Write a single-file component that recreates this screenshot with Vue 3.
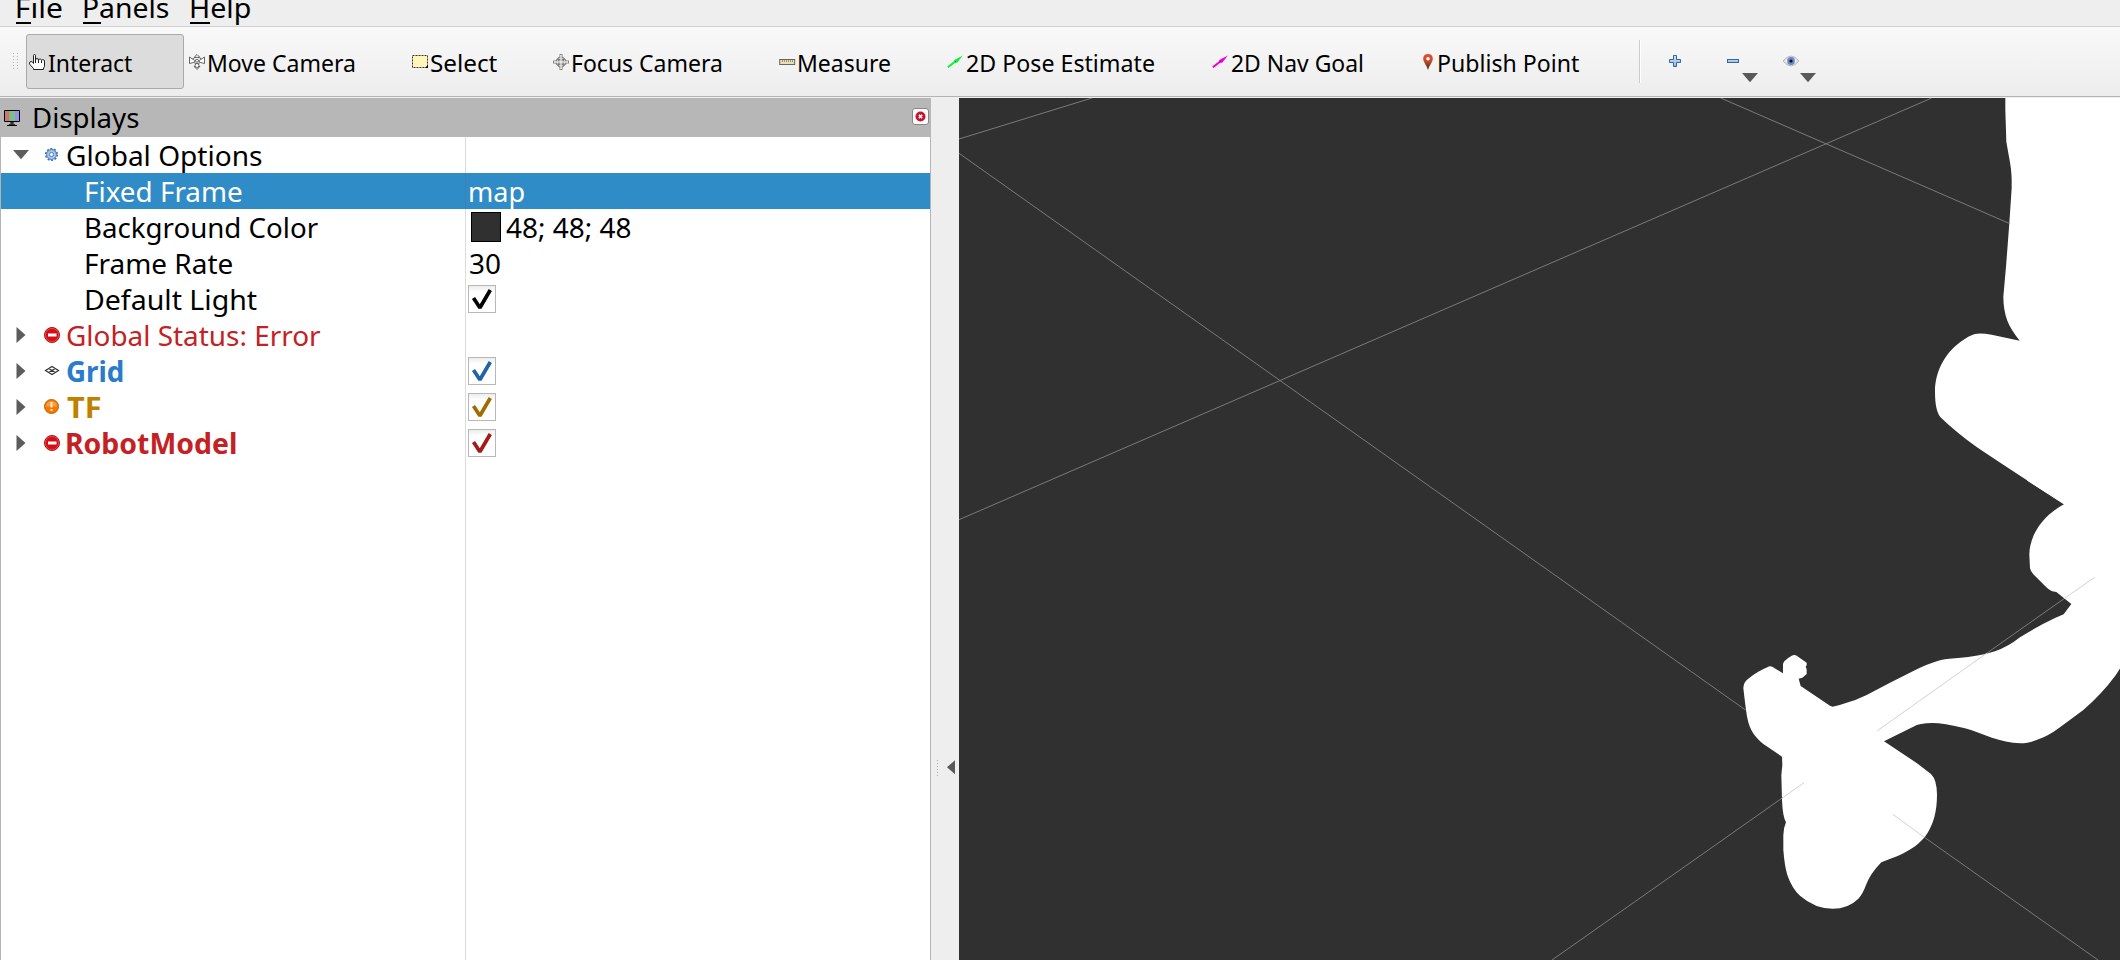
<script setup>
const ruler = document.createElement('canvas').getContext('2d')

// Squeezes a label horizontally so that its inked width equals the bound value.
const vFit = {
  mounted(el, { value }) {
    const css = getComputedStyle(el)
    ruler.font = `${css.fontWeight} ${css.fontSize} ${css.fontFamily}`
    const m = ruler.measureText(el.textContent)
    const s = value / (m.actualBoundingBoxLeft + m.actualBoundingBoxRight)
    el.style.transform = `translateX(${m.actualBoundingBoxLeft * s}px) scaleX(${s})`
  },
}

const menus = [
  { key: 'F', rest: 'ile', ink: 45, width: 66.5, line: 15 },
  { key: 'P', rest: 'anels', ink: 85, width: 107, line: 18 },
  { key: 'H', rest: 'elp', ink: 59, width: 80, line: 20 },
]

const tools = [
  { id: 'hand', label: 'Interact', width: 160, gap: 2.5, ink: 84, active: true },
  { id: 'move', label: 'Move Camera', width: 223, gap: 3.5, ink: 146 },
  { id: 'select', label: 'Select', width: 141, gap: 2.5, ink: 66 },
  { id: 'focus', label: 'Focus Camera', width: 226, gap: 3.5, ink: 149 },
  { id: 'measure', label: 'Measure', width: 168, gap: 3.5, ink: 91 },
  { id: 'pose', label: '2D Pose Estimate', width: 265, gap: 3.5, ink: 187 },
  { id: 'goal', label: '2D Nav Goal', width: 208, gap: 3.5, ink: 130 },
  { id: 'pin', label: 'Publish Point', width: 214, gap: 3, ink: 140 },
]

const rows = [
  { label: 'Global Options', ink: 195, icon: 'gear', open: true },
  { label: 'Fixed Frame', ink: 156, child: true, value: 'map', valueInk: 54, selected: true },
  { label: 'Background Color', ink: 232.5, child: true, swatch: true, value: '48; 48; 48', valueInk: 124.5 },
  { label: 'Frame Rate', ink: 146.5, child: true, value: '30', valueInk: 30 },
  { label: 'Default Light', ink: 171, child: true, check: '#000' },
  { label: 'Global Status: Error', ink: 254, icon: 'error', closed: true, tone: 'red' },
  { label: 'Grid', ink: 55.5, icon: 'grid', closed: true, tone: 'blue', bold: true, check: '#2163a5' },
  { label: 'TF', ink: 33, icon: 'warn', closed: true, tone: 'amber', bold: true, check: '#a06c00' },
  { label: 'RobotModel', ink: 169, icon: 'error', closed: true, tone: 'red', bold: true, check: '#a11a1c' },
]
</script>

<template>
  <div class="window">
    <nav class="menubar">
      <div v-for="m in menus" :key="m.key" class="menu" :style="{ width: m.width + 'px' }">
        <span v-fit="m.ink" class="fit">{{ m.key }}{{ m.rest }}</span>
        <i class="mnemonic" :style="{ width: m.line + 'px' }"></i>
      </div>
    </nav>

    <header class="toolbar">
      <svg class="grip" width="6" height="17" viewBox="0 0 6 17">
        <path d="M.5 0V17M4.5 0V17" stroke="#b4b4b4" stroke-dasharray="1 2" />
      </svg>
      <div v-for="t in tools" :key="t.id" class="slot" :style="{ width: t.width + 'px' }">
        <button class="tool" :class="{ active: t.active }">
          <svg width="16" height="16" viewBox="0 0 16 16" class="icon">
            <g v-if="t.id === 'hand'">
              <path d="M4.500 9.500V1.500Q4.500 .5 5.500 .5T6.500 1.500V6Q6.500 4.500 8 4.500T9.500 6Q10 4.800 11.200 5T12.500 6.500Q13 5.500 14.200 5.700T15.500 7V12.500L14.500 14V15.500H4.500V14.500L.5 10Q.3 7.500 2 7.500T4.500 9.500Z" fill="#fff" stroke="#222" />
              <path d="M6.500 6V9M9.500 6V9M12.500 6.500V9" stroke="#222" />
            </g>
            <g v-else-if="t.id === 'move'" fill="#fff" stroke="#555" stroke-width=".9">
              <path d="M8 .5L10.800 3.300H9V5.200H7V3.300H5.200ZM8 15.500L5.200 12.500H7V9.500H9V12.500H10.800Z" />
              <path d="M.5 3L3.500 5Q8 1.500 12.500 5L15.500 3V9.500L11.500 8.500Q8 11 4.500 8.500L.5 9.500Z" />
              <path d="M3.500 5Q8 9 12.500 5M4.500 8.500Q8 4.500 11.500 8.500" fill="none" />
              <circle cx="8" cy="6.700" r="1.500" />
              <circle cx="8" cy="11.500" r="2" />
            </g>
            <g v-else-if="t.id === 'select'">
              <rect x=".5" y="1.500" width="15" height="12" fill="#fff6b8" stroke="#333" stroke-dasharray="2 1" />
              <path d="M13 14L16 11V14Z" fill="#000" />
            </g>
            <g v-else-if="t.id === 'focus'" fill="none" stroke="#777">
              <circle cx="8" cy="8" r="5" fill="#fff" />
              <path d="M7 0V16M9 0V16M0 7H16M0 9H16" stroke-width=".9" />
              <path d="M7 .5H9M7 15.500H9M.5 7V9M15.500 7V9M5.500 4V12M10.500 4V12M4 5.500H12M4 10.500H12" stroke-width=".8" />
              <path d="M8 1V15M1 8H15" stroke="#fff" />
            </g>
            <g v-else-if="t.id === 'measure'">
              <rect x=".7" y="5.500" width="15" height="5" fill="#e8deb0" stroke="#666" />
              <path d="M3.500 6V8M5.500 6V8M7.500 6V8M9.500 6V8M11.500 6V8M13.500 6V8" stroke="#8c8664" stroke-width=".8" />
            </g>
            <g v-else-if="t.id === 'pose' || t.id === 'goal'" :class="t.id">
              <path d="M.2 12.500L7 7.200L7.300 6L15.800 1.500L10.200 8.800L8.300 8.800L1.500 14Z" />
              <path d="M7.500 7.500L9 7V8.500Z" fill="#222" opacity=".65" />
            </g>
            <g v-else>
              <defs>
                <linearGradient id="pinFill" x1="0" y1="0" x2="0" y2="1">
                  <stop offset="0" stop-color="#e94b30" />
                  <stop offset=".45" stop-color="#c54c2c" />
                  <stop offset="1" stop-color="#3b2a16" />
                </linearGradient>
              </defs>
              <path d="M8 0C4.900 0 3.200 2 3.200 4.800C3.200 8.500 6.600 11 8 16C9.400 11 12.800 8.500 12.800 4.800C12.800 2 11.100 0 8 0Z" fill="url(#pinFill)" />
              <circle cx="8" cy="4.800" r="1.800" fill="#fff" />
            </g>
          </svg>
          <span v-fit="t.ink" class="fit" :style="{ marginLeft: t.gap + 'px' }">{{ t.label }}</span>
        </button>
      </div>
      <i class="separator"></i>
      <svg class="extras" width="150" height="32" viewBox="1667 53 150 32">
        <defs>
          <linearGradient id="sky" x1="0" y1="0" x2="0" y2="1">
            <stop offset="0" stop-color="#d3e4f5" />
            <stop offset="1" stop-color="#8db6dd" />
          </linearGradient>
        </defs>
        <path d="M1673.500 56.500H1676.500V60.500H1680.500V63.500H1676.500V67.500H1673.500V63.500H1669.500V60.500H1673.500Z" fill="url(#sky)" stroke="#3465a4" />
        <rect x="1727.500" y="60.500" width="11" height="3" fill="url(#sky)" stroke="#3465a4" />
        <path d="M1742 74H1758L1750 83.200Z" fill="#595959" />
        <path d="M1783 62Q1791 52 1799 62Q1791 72 1783 62Z" fill="#dedede" stroke="#aaa" stroke-width=".7" />
        <path d="M1785 62Q1791 55.500 1797 62Q1791 68 1785 62Z" fill="#fafafa" />
        <circle cx="1791" cy="62" r="3.900" fill="#6c87c9" />
        <circle cx="1791" cy="62" r="1.600" fill="#111" />
        <path d="M1800 74H1816L1808 83.200Z" fill="#595959" />
      </svg>
    </header>

    <main class="body">
      <section class="panel">
        <div class="title">
          <svg width="16" height="16" viewBox="0 0 16 16" class="icon">
            <path d="M1 1H5.700V12H1Z" fill="#c77" />
            <path d="M5.700 1H10.500V12H5.700Z" fill="#75c57a" />
            <path d="M10.500 1H15V12H10.500Z" fill="#9494e0" />
            <path d="M.5 .5H15.500V11.500H.5ZM6 13H10M3 15.500H13" fill="none" stroke="#000" />
            <path d="M7 12H9V15H7ZM5 14H11V15H5Z" fill="#333" />
          </svg>
          <span v-fit="105" class="fit">Displays</span>
          <button class="close">
            <svg width="11" height="11" viewBox="0 0 11 11">
              <circle cx="5.500" cy="5.500" r="5" fill="#c6162f" />
              <path d="M3.900 3.900L7.100 7.100M7.100 3.900L3.900 7.100" stroke="#fff" stroke-width="1.500" />
            </svg>
          </button>
        </div>
        <div class="tree">
          <div v-for="r in rows" :key="r.label" class="row" :class="[r.tone, { selected: r.selected, child: r.child, bold: r.bold }]">
            <div class="name">
              <svg v-if="!r.child" class="arrow" width="16" height="18" viewBox="0 0 16 18">
                <path v-if="r.open" d="M0 4H16L8 13.200Z" fill="#5c5c5c" />
                <path v-else d="M3.500 1L12.500 9L3.500 17Z" fill="#5c5c5c" />
              </svg>
              <svg v-if="r.icon" class="icon node" width="16" height="16" viewBox="0 0 16 16">
                <g v-if="r.icon === 'gear'">
                  <circle cx="7.500" cy="7.500" r="5.700" fill="none" stroke="#3f6fb0" stroke-width="1.700" stroke-dasharray="1.990 1.590" />
                  <circle cx="7.500" cy="7.500" r="4.900" fill="#a9c6ea" stroke="#4c7cbc" />
                  <circle cx="7.500" cy="7.500" r="2" fill="#fff" stroke="#4c7cbc" />
                </g>
                <g v-else-if="r.icon === 'error'">
                  <circle cx="8" cy="8" r="7.500" fill="#d40f14" stroke="#b80d11" />
                  <circle cx="8" cy="8" r="6.600" fill="none" stroke="#ee6b6b" stroke-width=".6" />
                  <rect x="4" y="6.500" width="8.500" height="3" fill="#fff" />
                </g>
                <g v-else-if="r.icon === 'warn'">
                  <circle cx="7.500" cy="7.500" r="7" fill="#f57900" stroke="#c26208" />
                  <path d="M2 7.500A5.500 5.500 0 0 1 13 7.500Z" fill="#fa9c40" />
                  <path d="M6.500 3H8.500V8.500H6.500ZM6.500 10H8.500V12H6.500Z" fill="#ffe9d2" />
                </g>
                <g v-else fill="none" stroke="#333" stroke-width="1.200">
                  <path d="M1.500 7.500L8 3.500L14.500 7.500L8 11.500ZM4.750 5.500L11.250 9.500M11.250 5.500L4.750 9.500" />
                </g>
              </svg>
              <span v-fit="r.ink" class="fit">{{ r.label }}</span>
            </div>
            <div class="value">
              <i v-if="r.swatch" class="swatch"></i>
              <span v-if="r.value" v-fit="r.valueInk" class="fit">{{ r.value }}</span>
              <span v-if="r.check" class="box">
                <svg width="26" height="26" viewBox="0 0 26 26">
                  <path d="M4.500 12L10.900 21.800L21.300 4" fill="none" :stroke="r.check" stroke-width="3.700" stroke-linejoin="bevel" />
                </svg>
              </span>
            </div>
          </div>
          <div class="row filler">
            <div class="name"></div>
            <div class="value"></div>
          </div>
        </div>
      </section>

      <div class="splitter">
        <svg width="18" height="17" viewBox="0 0 18 17">
          <path d="M.5 0V17" stroke="#aaa" stroke-dasharray="1 2" />
          <path d="M18 .2V14.200L10 7.200Z" fill="#595959" />
        </svg>
      </div>

      <svg class="scene" width="1161" height="862" viewBox="959 98 1161 862">
        <g fill="#fff">
          <path transform="translate(1880 90) scale(.33333)" d="M376 20V60L379 155L386 195Q395 240 395 270V295L388 400L378 530L370 620Q370 660 382 692C390 712 402 730 419 752L335 734Q300 728 285 732Q270 735 240 757C195 790 165 845 165 905Q165 965 183 983Q230 1028 290 1071Q350 1112 552 1243L600 1400H730V20Z" />
          <path transform="translate(1700 480) scale(.33333)" d="M982 2L1092 73C1030 105 988 165 988 225L990 265Q992 274 1000 283L1030 313Q1045 329 1057 334L1069 336L1114 372L1091 403L1065 414Q1010 440 960 472Q925 500 885 514Q835 530 775 534Q735 536 715 542Q680 552 640 573L570 608L500 645L466 660L447 666Q425 674 398 680L390 677L302 618L296 596L307 593L320 582V568L317 560L320 556V548L290 527Q283 522 274 528Q248 543 249 555V580L218 561Q210 556 202 562Q172 574 144 597Q131 606 130 624L133 650L138 690Q143 730 154 750Q165 772 190 792L246 830L247 855L244 885L246 960Q248 1010 258 1027Q250 1045 250 1065L250 1110Q254 1160 262 1185Q276 1226 300 1247Q345 1286 398 1286Q445 1286 475 1256Q488 1243 498 1215Q510 1182 544 1147L575 1135C620 1117 650 1100 675 1070C700 1037 711 995 711 945Q711 900 693 882L650 849L552 784L640 740Q658 729 697 729Q730 729 795 745C850 760 900 790 962 790C1005 788 1050 765 1080 742L1150 690Q1205 643 1247 586L1270 550V0H982Z" />
        </g>
        <g stroke="#7a7a7a" stroke-width="1">
          <path d="M959 153.300L1745.500 710M959 519.700L1931.700 98M1720.700 98L2009.500 223.500M959 139L1092 98M1987 653L2064 598.700M1782.500 797.800L1552 960M1924 837L2098 960" />
        </g>
        <g stroke="#d2d2d2" stroke-width="1">
          <path d="M1877.300 730.700L1987 653M2064 598.700L2094.700 577.300M1804 782.700L1782.500 797.800M1892.800 814.300L1924 837" />
        </g>
      </svg>
    </main>
  </div>
</template>

<style>
body {
  overflow: hidden;
}
</style>

<style scoped>
.window {
  width: 2120px;
  height: 960px;
  overflow: hidden;
  display: flex;
  flex-direction: column;
  background: #eee;
  color: #000;
  font: 28px/36px "Noto Sans", sans-serif;
}
.fit {
  display: inline-block;
  flex: none;
  white-space: nowrap;
  transform-origin: left center;
}
.icon {
  flex: none;
  overflow: visible;
}
button {
  border: 0;
  background: none;
  font: inherit;
  color: inherit;
  padding: 0;
}
.menubar {
  height: 26px;
  flex: none;
  display: flex;
  padding-left: 17px;
  border-bottom: 1px solid #d0d0d0;
}
.menu {
  margin-top: -11px;
  height: 36px;
  position: relative;
}
.mnemonic {
  position: absolute;
  left: -1px;
  top: 33px;
  height: 2px;
  background: #000;
}
.toolbar {
  height: 69px;
  flex: none;
  display: flex;
  align-items: center;
  background: linear-gradient(#f9f9f9, #ededed);
  border-bottom: 1px solid #b4b4b4;
  margin-bottom: 1px;
  font-size: 23px;
}
.grip {
  margin: 0 7px 0 13px;
}
.slot {
  flex: none;
}
.tool {
  width: 158px;
  height: 55px;
  box-sizing: border-box;
  display: flex;
  align-items: center;
  padding-left: 2px;
  border: 1px solid transparent;
  border-radius: 3px;
}
.tool .fit {
  padding-top: 2px;
}
.tool.active {
  background: #dcdcdc;
  border-color: #aaa;
}
.pose {
  fill: #0ff23c;
}
.goal {
  fill: #f000d8;
}
.separator {
  width: 1px;
  height: 43px;
  margin-left: 8px;
  background: #ccc;
  border-right: 1px solid #fff;
}
.extras {
  margin: 13px 0 0 26px;
}
.body {
  flex: 1;
  display: flex;
  min-height: 0;
}
.panel {
  width: 931px;
  flex: none;
  display: flex;
  flex-direction: column;
}
.title {
  height: 39px;
  flex: none;
  display: flex;
  align-items: center;
  gap: 13.500px;
  padding: 0 2px 0 4px;
  background: #b7b7b7;
}
.title .fit {
  margin-bottom: 2px;
}
.close {
  width: 17px;
  height: 17px;
  box-sizing: border-box;
  margin-left: auto;
  margin-bottom: 2px;
  display: flex;
  align-items: center;
  justify-content: center;
  border: 1px solid #888;
  border-radius: 3px;
  background: #fafafa;
}
.tree {
  flex: 1;
  display: flex;
  flex-direction: column;
  background: #fff;
  border-left: 1px solid #b4b4b4;
  border-right: 1px solid #b4b4b4;
}
.row {
  height: 36px;
  flex: none;
  display: flex;
}
.filler {
  flex: 1;
}
.name {
  width: 465px;
  box-sizing: border-box;
  display: flex;
  align-items: center;
  padding-left: 12px;
  border-right: 1px solid #dcdcdc;
}
.child .name {
  padding-left: 85px;
}
.node {
  margin: 0 6.500px 0 15px;
}
.value {
  display: flex;
  align-items: center;
  padding-left: 3.500px;
}
.selected {
  background: #308cc6;
  color: #fff;
}
.selected .name {
  border-color: #3a83b5;
}
.bold {
  font-weight: 700;
}
.red {
  color: #c42124;
}
.blue {
  color: #2a7bca;
}
.amber {
  color: #c08000;
}
.swatch {
  width: 28px;
  height: 28px;
  margin: 0 4.500px 0 1.500px;
  border: 1px solid #000;
  background: #303030;
}
.box {
  width: 26px;
  height: 26px;
  margin-left: -1.500px;
  border: 1px solid #b8b8b8;
  background: linear-gradient(#ececec, #fff 6px);
}
.box svg {
  display: block;
}
.splitter {
  width: 28px;
  flex: none;
  padding-top: 662px;
  padding-left: 6px;
  box-sizing: border-box;
}
.splitter svg {
  display: block;
}
.scene {
  flex: none;
  display: block;
  background: #303030;
}
</style>
